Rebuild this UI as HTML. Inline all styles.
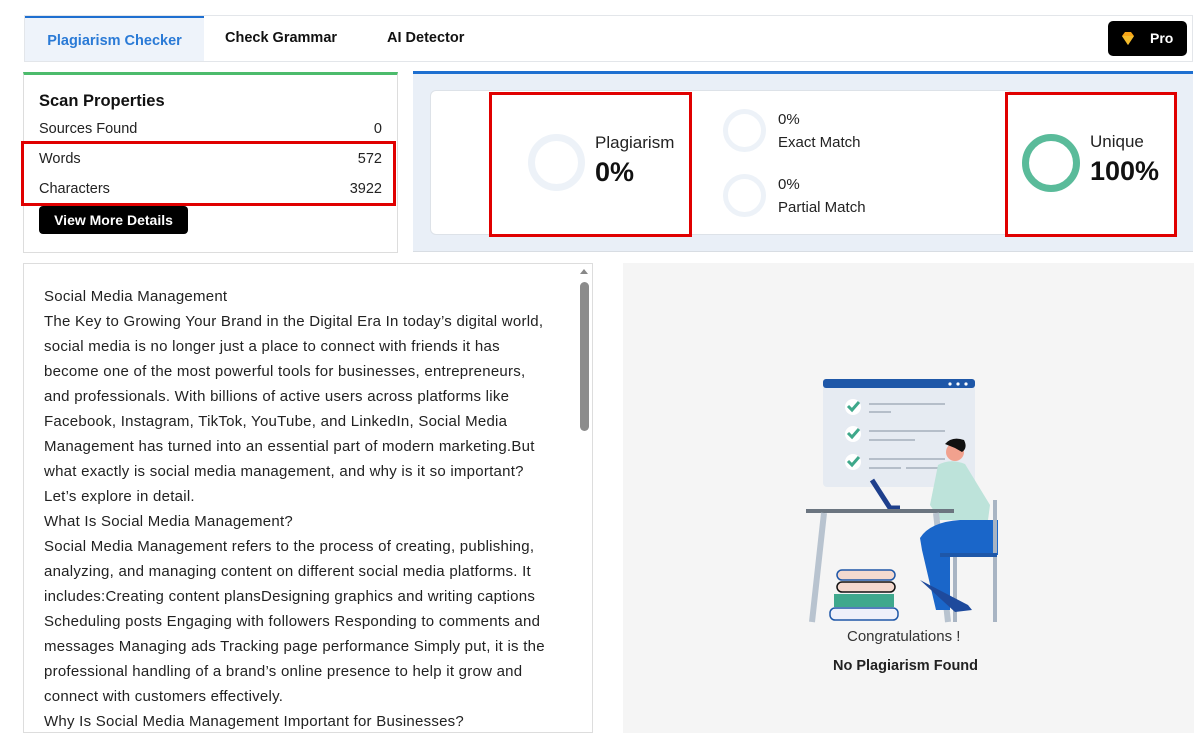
<!DOCTYPE html>
<html><head><meta charset="utf-8"><style>
*{box-sizing:border-box;margin:0;padding:0}
body{width:1194px;height:727px;background:#fff;font-family:"Liberation Sans",sans-serif;position:relative;overflow:hidden;color:#111}
.abs{position:absolute}
.tabs{left:24px;top:15px;width:1169px;height:47px;border:1px solid #e3e6ea;background:#fff}
.tab{position:absolute;top:0;height:45px;line-height:48px;font-weight:bold;font-size:14.5px}
.scan{left:23px;top:72px;width:375px;height:181px;border:1px solid #ddd;border-top:3px solid #4cbb6c}
.row{position:absolute;left:15px;right:15px;font-size:14.5px;color:#222}
.row span{float:right}
.red{border:3px solid #e00000;position:absolute}
.panel{left:413px;top:71px;width:780px;height:181px;background:#e9eff7;border-top:3px solid #1e6fd0;border-bottom:1px solid #d8dde3}
.card{left:430px;top:90px;width:583px;height:145px;background:#fff;border:1px solid #dde2e8;border-radius:6px}
.ring{position:absolute;border-radius:50%}
.txt{position:absolute;white-space:nowrap}
.ta{left:23px;top:263px;width:570px;height:470px;border:1px solid #ddd;background:#fff}
.ta .l{position:absolute;left:20px;font-size:15px;letter-spacing:0.25px;color:#222;white-space:nowrap}
.gray{left:623px;top:263px;width:571px;height:470px;background:#f5f5f5}
</style></head><body>
<div class="abs tabs">
 <div class="tab" style="left:0;width:179px;background:#eef3fa;border-top:2px solid #1e6fd0;color:#2a7ad6;text-align:center;line-height:47px">Plagiarism Checker</div>
 <div class="tab" style="left:200px;line-height:44px">Check Grammar</div>
 <div class="tab" style="left:362px;line-height:44px">AI Detector</div>
 <div style="position:absolute;left:1083px;top:5px;width:79px;height:35px;background:#000;border-radius:5px;color:#fff;font-weight:bold;font-size:14px;line-height:35px">
  <svg width="16" height="16" viewBox="0 0 16 16" style="position:absolute;left:12px;top:9px"><path d="M2 6 L5 2 H11 L14 6 L8 15 Z" fill="#f6a417"/><path d="M2 6 H14 L8 15Z" fill="#f3bc2c"/></svg>
  <span style="position:absolute;left:42px">Pro</span></div>
</div>

<div class="abs scan">
 <div class="txt" style="left:15px;top:17px;font-weight:bold;font-size:16.5px">Scan Properties</div>
 <div class="row" style="top:46px">Sources Found<span>0</span></div>
 <div class="row" style="top:76px">Words<span>572</span></div>
 <div class="row" style="top:106px">Characters<span>3922</span></div>
 <div style="position:absolute;left:15px;top:131px;width:149px;height:28px;background:#000;border-radius:4px;color:#fff;font-weight:bold;font-size:14px;line-height:28px;text-align:center">View More Details</div>
</div>
<div class="red" style="left:21px;top:141px;width:375px;height:65px"></div>

<div class="abs panel"></div>
<div class="abs card">
 <div class="ring" style="left:97px;top:43px;width:57px;height:57px;border:7px solid #edf2f8"></div>
 <div class="txt" style="left:164px;top:42px;font-size:17px;color:#222">Plagiarism</div>
 <div class="txt" style="left:164px;top:66px;font-size:27px;font-weight:bold">0%</div>
 <div class="ring" style="left:292px;top:18px;width:43px;height:43px;border:5px solid #edf2f8"></div>
 <div class="txt" style="left:347px;top:20px;font-size:15px;color:#222">0%</div>
 <div class="txt" style="left:347px;top:43px;font-size:15px;color:#222">Exact Match</div>
 <div class="ring" style="left:292px;top:83px;width:43px;height:43px;border:5px solid #edf2f8"></div>
 <div class="txt" style="left:347px;top:85px;font-size:15px;color:#222">0%</div>
 <div class="txt" style="left:347px;top:108px;font-size:15px;color:#222">Partial Match</div>
</div>
<div class="red" style="left:1005px;top:92px;width:172px;height:145px;background:#fff"></div>
<div class="ring" style="left:1022px;top:134px;width:58px;height:58px;border:7px solid #5abb9a"></div>
<div class="txt" style="left:1090px;top:132px;font-size:17px;color:#222">Unique</div>
<div class="txt" style="left:1090px;top:156px;font-size:27px;font-weight:bold">100%</div>
<div class="red" style="left:489px;top:92px;width:203px;height:145px"></div>

<div class="abs ta">
 <div class="l" style="top:24px">Social Media Management</div>
 <div class="l" style="top:49px">The Key to Growing Your Brand in the Digital Era In today’s digital world,</div>
 <div class="l" style="top:74px">social media is no longer just a place to connect with friends it has</div>
 <div class="l" style="top:99px">become one of the most powerful tools for businesses, entrepreneurs,</div>
 <div class="l" style="top:124px">and professionals. With billions of active users across platforms like</div>
 <div class="l" style="top:149px">Facebook, Instagram, TikTok, YouTube, and LinkedIn, Social Media</div>
 <div class="l" style="top:174px">Management has turned into an essential part of modern marketing.But</div>
 <div class="l" style="top:199px">what exactly is social media management, and why is it so important?</div>
 <div class="l" style="top:224px">Let’s explore in detail.</div>
 <div class="l" style="top:249px">What Is Social Media Management?</div>
 <div class="l" style="top:274px">Social Media Management refers to the process of creating, publishing,</div>
 <div class="l" style="top:299px">analyzing, and managing content on different social media platforms. It</div>
 <div class="l" style="top:324px">includes:Creating content plansDesigning graphics and writing captions</div>
 <div class="l" style="top:349px">Scheduling posts Engaging with followers Responding to comments and</div>
 <div class="l" style="top:374px">messages Managing ads Tracking page performance Simply put, it is the</div>
 <div class="l" style="top:399px">professional handling of a brand’s online presence to help it grow and</div>
 <div class="l" style="top:424px">connect with customers effectively.</div>
 <div class="l" style="top:449px">Why Is Social Media Management Important for Businesses?</div>
 <div style="position:absolute;left:556px;top:5px;width:0;height:0;border-left:4px solid transparent;border-right:4px solid transparent;border-bottom:5px solid #888"></div>
 <div style="position:absolute;left:556px;top:18px;width:9px;height:149px;background:#8c8c8c;border-radius:5px"></div>
</div>

<div class="abs gray"></div>
<svg class="abs" style="left:790px;top:360px" width="240" height="280" viewBox="0 0 240 280">
 <rect x="33" y="19" width="152" height="108" rx="4" fill="#e6ebf2"/>
 <rect x="33" y="19" width="152" height="9" rx="3" fill="#1e57a8"/>
 <circle cx="160" cy="24" r="1.6" fill="#fff"/><circle cx="168" cy="24" r="1.6" fill="#fff"/><circle cx="176" cy="24" r="1.6" fill="#fff"/>
 <g fill="#fff"><circle cx="63" cy="47" r="8"/><circle cx="63" cy="74" r="8"/><circle cx="63" cy="102" r="8"/></g>
 <g stroke="#3ea88a" stroke-width="3" fill="none"><path d="M58 46l4 4 7-8"/><path d="M58 73l4 4 7-8"/><path d="M58 101l4 4 7-8"/></g>
 <g stroke="#b5bec9" stroke-width="2"><path d="M79 44h76M79 52h22M79 71h76M79 80h46M79 99h76M79 108h32M116 108h33"/></g>
 <path d="M140 145 L148 105 Q160 98 175 104 L200 145 L198 160 L150 160Z" fill="#bde3da"/>
 <circle cx="165" cy="92" r="9" fill="#f1a18e"/>
 <path d="M155 84 Q162 76 174 80 Q178 88 172 92 L165 88Z" fill="#111"/>
 <path d="M82 120 L100 148 L110 148" stroke="#1e3f8c" stroke-width="5" fill="none"/>
 <rect x="16" y="149" width="148" height="4" fill="#6b7580"/>
 <path d="M34 153 L22 262 M146 153 L158 262" stroke="#b8c3cf" stroke-width="6"/>
 <path d="M130 178 Q140 162 170 160 L208 160 L208 195 L160 195 L160 250 L146 250 L132 190Z" fill="#1a66c9"/>
 <path d="M205 140 L205 230 M165 195 L165 262 M205 195 L205 262" stroke="#a8b4c3" stroke-width="4"/>
 <rect x="150" y="193" width="57" height="4" fill="#1e57a8"/>
 <path d="M130 220 L178 245 L182 250 L165 252" fill="#1e4a9c"/>
 <rect x="47" y="210" width="58" height="10" rx="5" fill="#f4d9cf" stroke="#1e57a8" stroke-width="1.5"/>
 <rect x="47" y="222" width="58" height="10" rx="5" fill="#f4d9cf" stroke="#111" stroke-width="1.5"/>
 <rect x="44" y="234" width="60" height="13" fill="#3fa88d"/>
 <rect x="40" y="248" width="68" height="12" rx="5" fill="#eef0fa" stroke="#1e57a8" stroke-width="1.5"/>
</svg>
<div class="txt" style="left:847px;top:628px;font-size:15px;color:#333">Congratulations !</div>
<div class="txt" style="left:833px;top:658px;font-size:14.5px;font-weight:bold;color:#222">No Plagiarism Found</div>
</body></html>
